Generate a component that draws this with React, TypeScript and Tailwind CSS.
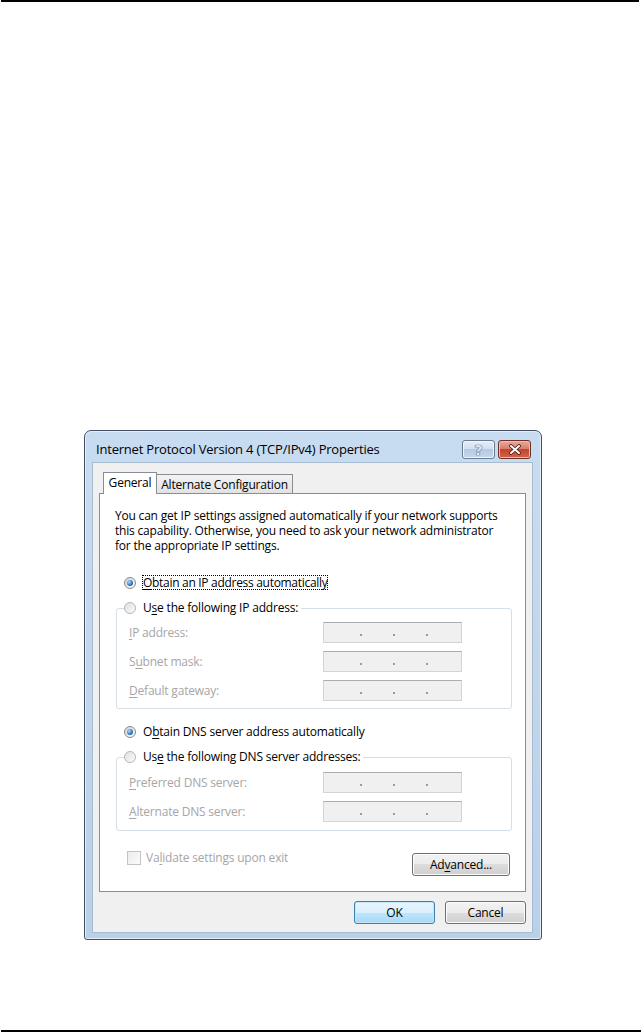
import React from "react";

const U = ({ children }: { children: React.ReactNode }) => (
  <span className="underline underline-offset-[2px] decoration-[1px]">{children}</span>
);

function Radio({ checked }: { checked?: boolean }) {
  return checked ? (
    <span className="w-[12px] h-[12px] shrink-0 rounded-full border border-[#86898c] bg-gradient-to-br from-[#d4d4d4] to-[#ffffff] flex items-center justify-center">
      <span className="w-[6px] h-[6px] rounded-full bg-[radial-gradient(circle_at_35%_35%,#a9defc,#2c70bd_60%,#164f8f)]" />
    </span>
  ) : (
    <span className="w-[12px] h-[12px] shrink-0 rounded-full border border-[#b7b7b7] bg-gradient-to-br from-[#e0e0e0] to-[#fbfbfb]" />
  );
}

function IpField() {
  return (
    <div className="w-[139px] h-[21px] border border-[#d4d4d4] border-t-[#acacac] bg-[#f0f0f0] flex items-end pb-[6px] pl-[36px] gap-[31px]">
      <span className="w-[2px] h-[2px] bg-[#9a9ca0]" />
      <span className="w-[2px] h-[2px] bg-[#9a9ca0]" />
      <span className="w-[2px] h-[2px] bg-[#9a9ca0]" />
    </div>
  );
}

function FieldRow({ label }: { label: React.ReactNode }) {
  return (
    <div className="flex items-center h-[21px]">
      <span className="w-[206px] pl-[12px] text-[#a6a6a6] whitespace-nowrap">{label}</span>
      <IpField />
    </div>
  );
}

function WinButton({ children, def, w }: { children: React.ReactNode; def?: boolean; w: string }) {
  return (
    <div
      className={
        "h-[23px] rounded-[3px] border flex items-center justify-center text-black " +
        w +
        (def
          ? " border-[#3c7fb1] bg-[linear-gradient(#eaf6fd_0%,#d9f0fc_50%,#bee6fd_50%,#a7d9f5_100%)] shadow-[inset_0_0_0_1px_#c6e6fa]"
          : " border-[#707070] bg-[linear-gradient(#f2f2f2_0%,#ebebeb_50%,#dddddd_50%,#cfcfcf_100%)] shadow-[inset_0_0_0_1px_#fcfcfc]")
      }
    >
      {children}
    </div>
  );
}

export default function App() {
  return (
    <div className="w-[642px] h-[1035px] bg-white flex flex-col font-['Open_Sans','Noto_Sans',sans-serif] text-[12px] tracking-[-0.2px] text-black">
      <div className="h-[2px] ml-[1px] w-[638px] bg-black" />

      {/* dialog */}
      <div className="mt-[428px] ml-[84px] w-[458px] h-[510px] rounded-t-[7px] rounded-b-[3px] border border-[#414f60] bg-gradient-to-b from-[#c8dcf1] to-[#b9d0e9] flex flex-col shadow-[inset_0_0_0_1px_#e3eef9]">
        {/* title bar */}
        <div className="h-[31px] flex items-start pl-[11px] pr-[10px]">
          <div className="pt-[11px] text-[13px] leading-[15px] tracking-[-0.2px] whitespace-nowrap">
            Internet Protocol Version 4 (TCP/IPv4) Properties
          </div>
          <div className="ml-auto mt-[9px] flex gap-[3px]">
            <div className="w-[33px] h-[19px] rounded-[3px] border border-[#6a7b90] bg-[linear-gradient(#e6eef8_0%,#d2e0f0_45%,#b5cae2_50%,#c4d7ec_100%)] shadow-[inset_0_0_0_1px_#f1f6fc] flex items-center justify-center">
              <span className="font-['DejaVu_Sans',sans-serif] font-bold text-[14px] leading-none text-[#e4e8ee] [text-shadow:0_0_1px_#3d4450,0_0_1px_#3d4450]">?</span>
            </div>
            <div className="w-[33px] h-[19px] rounded-[3px] border border-[#6d3026] bg-[linear-gradient(#e9a99b_0%,#d9806d_45%,#c3452d_50%,#d2634a_100%)] shadow-[inset_0_0_0_1px_#eebcb0] flex items-center justify-center">
              <svg width="14" height="11" viewBox="0 0 14 11">
                <path d="M3 2 L11 9 M11 2 L3 9" stroke="#4a1a12" strokeWidth="3.6" strokeLinecap="round" />
                <path d="M3 2 L11 9 M11 2 L3 9" stroke="#ffffff" strokeWidth="2" strokeLinecap="round" />
              </svg>
            </div>
          </div>
        </div>

        {/* client area */}
        <div className="ml-[7px] w-[441px] h-[471px] bg-[#f0f0f0] border border-[#a7bbd1] flex flex-col">
          {/* tabs */}
          <div className="mt-[9px] ml-[10px] flex items-end relative z-10 -mb-px">
            <div className="w-[54px] h-[22px] border border-b-0 border-[#898c95] bg-white flex items-center justify-center pb-[1px]">
              General
            </div>
            <div className="-ml-px mb-[1px] w-[137px] h-[19px] border border-b-0 border-[#898c95] bg-gradient-to-b from-[#f3f3f3] to-[#e2e2e2] flex items-center justify-center pt-[2px]">
              Alternate Configuration
            </div>
          </div>

          {/* panel */}
          <div className="ml-[6px] w-[427px] h-[399px] border border-[#898c95] bg-white flex flex-col">
            <div className="mt-[14px] ml-[15px] leading-[15px] whitespace-nowrap">
              You can get IP settings assigned automatically if your network supports
              <br />
              this capability. Otherwise, you need to ask your network administrator
              <br />
              for the appropriate IP settings.
            </div>

            <div className="mt-[22px] ml-[24px] flex items-center gap-[6px] h-[15px]">
              <Radio checked />
              <span className="border border-dotted border-black h-[15px] leading-[13px] whitespace-nowrap tracking-[-0.3px]">
                <U>O</U>btain an IP address automatically
              </span>
            </div>

            <fieldset className="mt-[10px] ml-[16px] w-[396px] border border-[#d5dfe5] rounded-[3px] pb-[7px]">
              <legend className="ml-[7px] pr-[3px]">
                <span className="flex items-center gap-[7px] h-[16px] whitespace-nowrap">
                  <Radio />
                  <span>
                    U<U>s</U>e the following IP address:
                  </span>
                </span>
              </legend>
              <div className="pt-[6px] flex flex-col gap-[8px]">
                <FieldRow label={<><U>I</U>P address:</>} />
                <FieldRow label={<>S<U>u</U>bnet mask:</>} />
                <FieldRow label={<><U>D</U>efault gateway:</>} />
              </div>
            </fieldset>

            <div className="mt-[15px] ml-[24px] flex items-center gap-[7px] h-[15px] whitespace-nowrap">
              <Radio checked />
              <span>
                O<U>b</U>tain DNS server address automatically
              </span>
            </div>

            <fieldset className="mt-[10px] ml-[16px] w-[396px] border border-[#d5dfe5] rounded-[3px] pb-[8px]">
              <legend className="ml-[7px] pr-[3px]">
                <span className="flex items-center gap-[7px] h-[16px] whitespace-nowrap">
                  <Radio />
                  <span>
                    Us<U>e</U> the following DNS server addresses:
                  </span>
                </span>
              </legend>
              <div className="pt-[7px] flex flex-col gap-[8px]">
                <FieldRow label={<><U>P</U>referred DNS server:</>} />
                <FieldRow label={<><U>A</U>lternate DNS server:</>} />
              </div>
            </fieldset>

            <div className="mt-[20px] flex items-start pl-[27px] pr-[15px]">
              <div className="flex items-center gap-[5px] h-[14px]">
                <span className="w-[14px] h-[14px] border border-[#c4c4c4] bg-gradient-to-br from-[#ececec] to-[#fbfbfb]" />
                <span className="text-[#a6a6a6] whitespace-nowrap">
                  Va<U>l</U>idate settings upon exit
                </span>
              </div>
              <div className="ml-auto mt-[2px]">
                <WinButton w="w-[98px]">
                  Ad<U>v</U>anced...
                </WinButton>
              </div>
            </div>
          </div>

          {/* bottom buttons */}
          <div className="mt-[9px] flex justify-end gap-[10px] pr-[6px]">
            <WinButton def w="w-[81px]">OK</WinButton>
            <WinButton w="w-[81px]">Cancel</WinButton>
          </div>
        </div>
      </div>

      <div className="mt-[90px] ml-[1px] w-[640px] h-[2px] bg-black" />
    </div>
  );
}
